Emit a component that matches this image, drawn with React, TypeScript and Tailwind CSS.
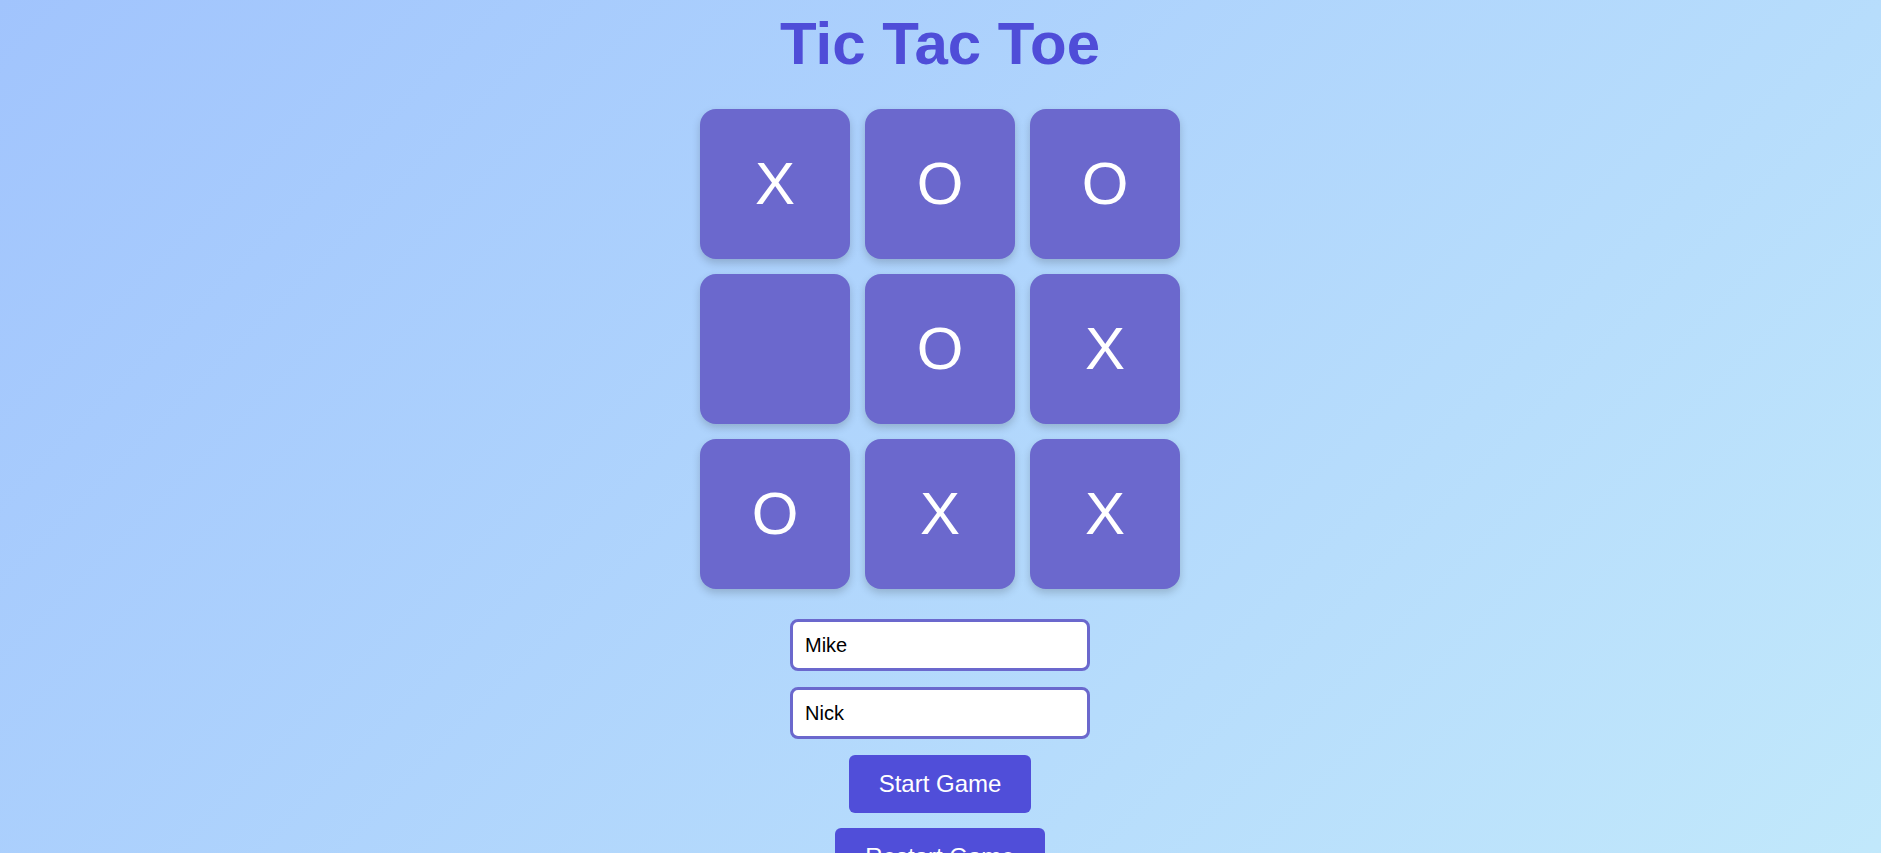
import { useState } from "react";

const initial = ["X", "O", "O", "", "O", "X", "O", "X", "X"];

export default function App() {
  const [board, setBoard] = useState<string[]>(initial);
  const [p1, setP1] = useState("Mike");
  const [p2, setP2] = useState("Nick");

  return (
    <div className="min-h-screen bg-linear-135 from-[#a1c4fd] to-[#c2e9fb] font-['Liberation_Sans',Arial,sans-serif] flex flex-col items-center pt-[14px] pr-px pb-8">
      {/* Title */}
      <h1 className="text-[60px] leading-none font-bold text-[#4f4dd8] mb-[35px]">
        Tic Tac Toe
      </h1>

      {/* Board */}
      <div className="grid grid-cols-[repeat(3,150px)] gap-[15px]">
        {board.map((v, i) => (
          <button
            key={i}
            onClick={() => {
              if (v) return;
              const next = [...board];
              next[i] = "X";
              setBoard(next);
            }}
            className="w-[150px] h-[150px] rounded-2xl bg-[#6b68cd] text-white text-[60px] leading-none flex items-center justify-center shadow-[0_4px_8px_rgba(0,0,0,0.18)]"
          >
            {v}
          </button>
        ))}
      </div>

      {/* Players */}
      <input
        value={p1}
        onChange={(e) => setP1(e.target.value)}
        className="mt-[30px] w-[300px] h-[52px] px-3 text-[20px] text-black bg-white border-[3px] border-[#6b68cd] rounded-lg outline-none"
      />
      <input
        value={p2}
        onChange={(e) => setP2(e.target.value)}
        className="mt-4 w-[300px] h-[52px] px-3 text-[20px] text-black bg-white border-[3px] border-[#6b68cd] rounded-lg outline-none"
      />

      <button
        onClick={() => setBoard(Array(9).fill(""))}
        className="mt-4 h-[58px] px-[30px] rounded-md bg-[#504ed9] text-white text-2xl"
      >
        Start Game
      </button>
      <button
        onClick={() => setBoard(Array(9).fill(""))}
        className="mt-[15px] h-[58px] px-[30px] rounded-md bg-[#504ed9] text-white text-2xl"
      >
        Restart Game
      </button>
    </div>
  );
}
